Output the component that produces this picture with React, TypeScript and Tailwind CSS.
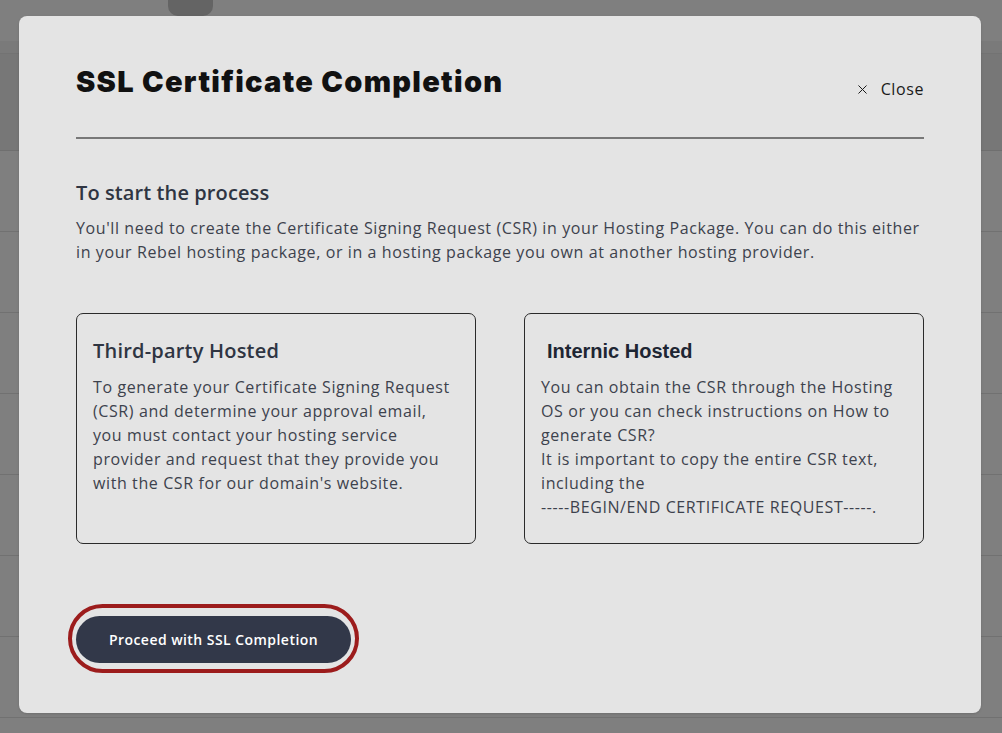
import { X } from "lucide-react";

const bgRows = [0, 1, 2, 3, 4, 5, 6, 7];

function InfoCard({
  title,
  titleClass,
  lines,
}: {
  title: string;
  titleClass: string;
  lines: string[];
}) {
  return (
    <div className="h-[231px] flex-1 rounded-[7px] border border-[#2a2a2a] px-4 pt-[23px]">
      <h3 className={titleClass}>{title}</h3>
      <p className="mt-[10px] text-[16px] leading-[24px] tracking-[0.6px] text-[#3d424d]">
        {lines.map((line, i) => (
          <span key={i}>
            {line}
            {i < lines.length - 1 && <br />}
          </span>
        ))}
      </p>
    </div>
  );
}

export default function App() {
  return (
    <div className="relative h-[733px] w-full overflow-hidden bg-[#7f7f7f] font-['Open_Sans',sans-serif]">
      {/* page behind the overlay */}
      <div className="flex flex-col">
        <div className="h-[41px] pl-[168px]">
          <div className="h-[16px] w-[45px] rounded-b-[10px] bg-[#646464]" />
        </div>
        <div className="h-[13px] border-b border-[#737373] bg-[#7a7a7a]" />
        <div className="h-[97px] border-b border-[#6f6f6f] bg-[#777777]" />
        {bgRows.map((r) => (
          <div key={r} className="h-[81px] border-b border-[#717171]" />
        ))}
      </div>

      {/* modal */}
      <div className="absolute inset-0 pl-[19px] pt-[16px]">
        <div className="h-[697px] w-[962px] rounded-[8px] bg-[#e4e4e4] px-[57px] pt-[46px] shadow-sm">
          <div className="flex items-start justify-between">
            <h1 className="font-['Inter',sans-serif] text-[29px] font-black leading-[40px] tracking-[1.3px] text-[#111111]">
              SSL Certificate Completion
            </h1>
            <button className="mt-[15px] flex items-center gap-[11px] text-[16px] leading-[24px] tracking-[0.6px] text-[#1a1a1a]">
              <X size={15} strokeWidth={1.6} />
              Close
            </button>
          </div>
          <div className="mt-[35px] h-[2px] bg-[#787878]" />

          <h2 className="mt-[40px] text-[20px] font-semibold leading-[28px] tracking-[0.1px] text-[#2f3542]">
            To start the process
          </h2>
          <p className="mt-[9px] text-[16px] leading-[24px] tracking-[0.6px] text-[#3d424d]">
            You'll need to create the Certificate Signing Request (CSR) in your Hosting Package. You can do this either
            <br />
            in your Rebel hosting package, or in a hosting package you own at another hosting provider.
          </p>

          <div className="mt-[49px] flex gap-[48px]">
            <InfoCard
              title="Third-party Hosted"
              titleClass="text-[20px] font-semibold leading-[28px] tracking-[0.2px] text-[#2f3542]"
              lines={[
                "To generate your Certificate Signing Request",
                "(CSR) and determine your approval email,",
                "you must contact your hosting service",
                "provider and request that they provide you",
                "with the CSR for our domain's website.",
              ]}
            />
            <InfoCard
              title="Internic Hosted"
              titleClass="pl-[6px] font-['Liberation_Sans',Arial,sans-serif] text-[20px] font-bold leading-[28px] text-[#1e2633]"
              lines={[
                "You can obtain the CSR through the Hosting",
                "OS or you can check instructions on How to",
                "generate CSR?",
                "It is important to copy the entire CSR text,",
                "including the",
                "-----BEGIN/END CERTIFICATE REQUEST-----.",
              ]}
            />
          </div>

          <div className="-ml-[8px] mt-[60px] inline-block rounded-full border-[4px] border-[#9c1c1c] px-[4px] pb-[6px] pt-[8px]">
            <button className="flex h-[47px] w-[275px] items-center justify-center rounded-full bg-[#323849] text-[14px] font-semibold tracking-[0.45px] text-white">
              Proceed with SSL Completion
            </button>
          </div>
        </div>
      </div>
    </div>
  );
}
